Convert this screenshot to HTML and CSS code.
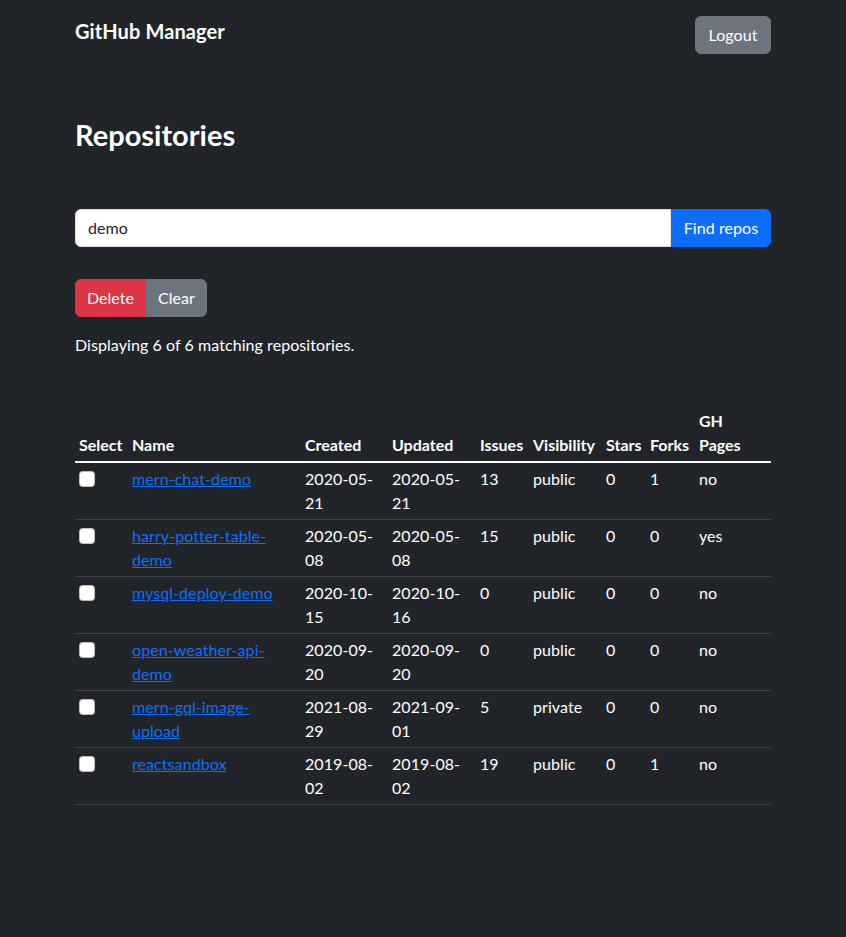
FILE: index.html
```html
<!DOCTYPE html>
<html lang="en">
<head>
<meta charset="utf-8">
<title>GitHub Manager</title>
<link rel="stylesheet" href="styles.css">
</head>
<body>
<nav class="navbar">
  <div class="container nav-inner">
    <span class="brand">GitHub Manager</span>
    <button class="btn btn-secondary btn-logout">Logout</button>
  </div>
</nav>
<main class="container">
  <h1 class="title">Repositories</h1>
  <form class="input-group">
    <input class="form-control" type="text" value="demo">
    <button class="btn btn-primary btn-find" type="button">Find repos</button>
  </form>
  <div class="btn-group">
    <button class="btn btn-danger" type="button">Delete</button>
    <button class="btn btn-secondary" type="button">Clear</button>
  </div>
  <p class="status">Displaying 6 of 6 matching repositories.</p>
  <table class="table">
    <colgroup>
      <col class="c-select"><col class="c-name"><col class="c-created"><col class="c-updated"><col class="c-issues"><col class="c-vis"><col class="c-stars"><col class="c-forks"><col class="c-pages">
    </colgroup>
    <thead>
      <tr><th>Select</th><th>Name</th><th>Created</th><th>Updated</th><th>Issues</th><th>Visibility</th><th>Stars</th><th>Forks</th><th>GH Pages</th></tr>
    </thead>
    <tbody>
      <tr><td><input class="check" type="checkbox"></td><td><a href="#">mern-chat-demo</a></td><td>2020-05-21</td><td>2020-05-21</td><td>13</td><td>public</td><td>0</td><td>1</td><td>no</td></tr>
      <tr><td><input class="check" type="checkbox"></td><td><a href="#">harry-potter-table-demo</a></td><td>2020-05-08</td><td>2020-05-08</td><td>15</td><td>public</td><td>0</td><td>0</td><td>yes</td></tr>
      <tr><td><input class="check" type="checkbox"></td><td><a href="#">mysql-deploy-demo</a></td><td>2020-10-15</td><td>2020-10-16</td><td>0</td><td>public</td><td>0</td><td>0</td><td>no</td></tr>
      <tr><td><input class="check" type="checkbox"></td><td><a href="#">open-weather-api-demo</a></td><td>2020-09-20</td><td>2020-09-20</td><td>0</td><td>public</td><td>0</td><td>0</td><td>no</td></tr>
      <tr><td><input class="check" type="checkbox"></td><td><a href="#">mern-gql-image-upload</a></td><td>2021-08-29</td><td>2021-09-01</td><td>5</td><td>private</td><td>0</td><td>0</td><td>no</td></tr>
      <tr><td><input class="check" type="checkbox"></td><td><a href="#">reactsandbox</a></td><td>2019-08-02</td><td>2019-08-02</td><td>19</td><td>public</td><td>0</td><td>1</td><td>no</td></tr>
    </tbody>
  </table>
</main>
</body>
</html>
```
FILE: styles.css
```css
* { box-sizing: border-box; }
html, body { margin: 0; padding: 0; }
body {
  background: #212529;
  color: #fff;
  font-family: "Lato", "Segoe UI", "Noto Sans", sans-serif;
  font-size: 16px;
  line-height: 24px;
  letter-spacing: 0.07px;
}
.container {
  width: 720px;
  margin: 0 auto;
  padding: 0 12px;
}
.navbar { padding-top: 16px; }
.nav-inner {
  display: flex;
  justify-content: space-between;
  align-items: flex-start;
}
.brand {
  font-size: 20px;
  line-height: 30px;
  font-weight: 700;
  letter-spacing: 0.1px;
}
.btn {
  font-family: inherit;
  font-size: 16px;
  line-height: 24px;
  letter-spacing: inherit;
  padding: 6px 12px;
  border: 1px solid transparent;
  border-radius: 6px;
  color: #fff;
  cursor: pointer;
}
.btn-logout { width: 76px; padding: 6px 0; }
.btn-secondary { background: #6c757d; border-color: #6c757d; }
.btn-primary { background: #0d6efd; border-color: #0d6efd; }
.btn-danger { background: #dc3545; border-color: #dc3545; }
.title {
  margin: 63px 0 0;
  font-size: 29px;
  line-height: 36px;
  font-weight: 700;
  letter-spacing: 0;
}
.input-group {
  display: flex;
  margin: 56px 0 0;
}
.form-control {
  flex: 1;
  min-width: 0;
  font-family: inherit;
  font-size: 16px;
  line-height: 24px;
  letter-spacing: inherit;
  padding: 6px 12px;
  color: #212529;
  background: #fff;
  border: 1px solid #dee2e6;
  border-radius: 6px 0 0 6px;
  outline: none;
}
.btn-find {
  width: 100px;
  border-radius: 0 6px 6px 0;
  padding: 6px 0;
}
.btn-group {
  display: flex;
  margin-top: 32px;
}
.btn-group .btn:first-child { border-radius: 6px 0 0 6px; width: 71px; padding: 6px 0; }
.btn-group .btn:last-child { border-radius: 0 6px 6px 0; width: 61px; padding: 6px 0; }
.status { margin: 16px 0 0; }
.table {
  margin-top: 48px;
  width: 696px;
  table-layout: fixed;
  border-collapse: collapse;
}
.c-select { width: 53px; }
.c-name { width: 173px; }
.c-created { width: 87px; }
.c-updated { width: 88px; }
.c-issues { width: 53px; }
.c-vis { width: 73px; }
.c-stars { width: 44px; }
.c-forks { width: 49px; }
.c-pages { width: 76px; }
th, td {
  padding: 4px;
  text-align: left;
}
th {
  font-weight: 700;
  vertical-align: bottom;
  white-space: normal;
  letter-spacing: 0;
}
td {
  vertical-align: top;
  border-bottom: 1px solid #3d4247;
}
tbody { border-top: 2px solid #fff; }
a { color: #0d6efd; text-decoration: underline; }
.check {
  -webkit-appearance: none;
  appearance: none;
  display: block;
  width: 16px;
  height: 16px;
  margin: 4px 0 0;
  background: #fff;
  border: 1px solid rgba(0,0,0,.25);
  border-radius: 4px;
}
```
